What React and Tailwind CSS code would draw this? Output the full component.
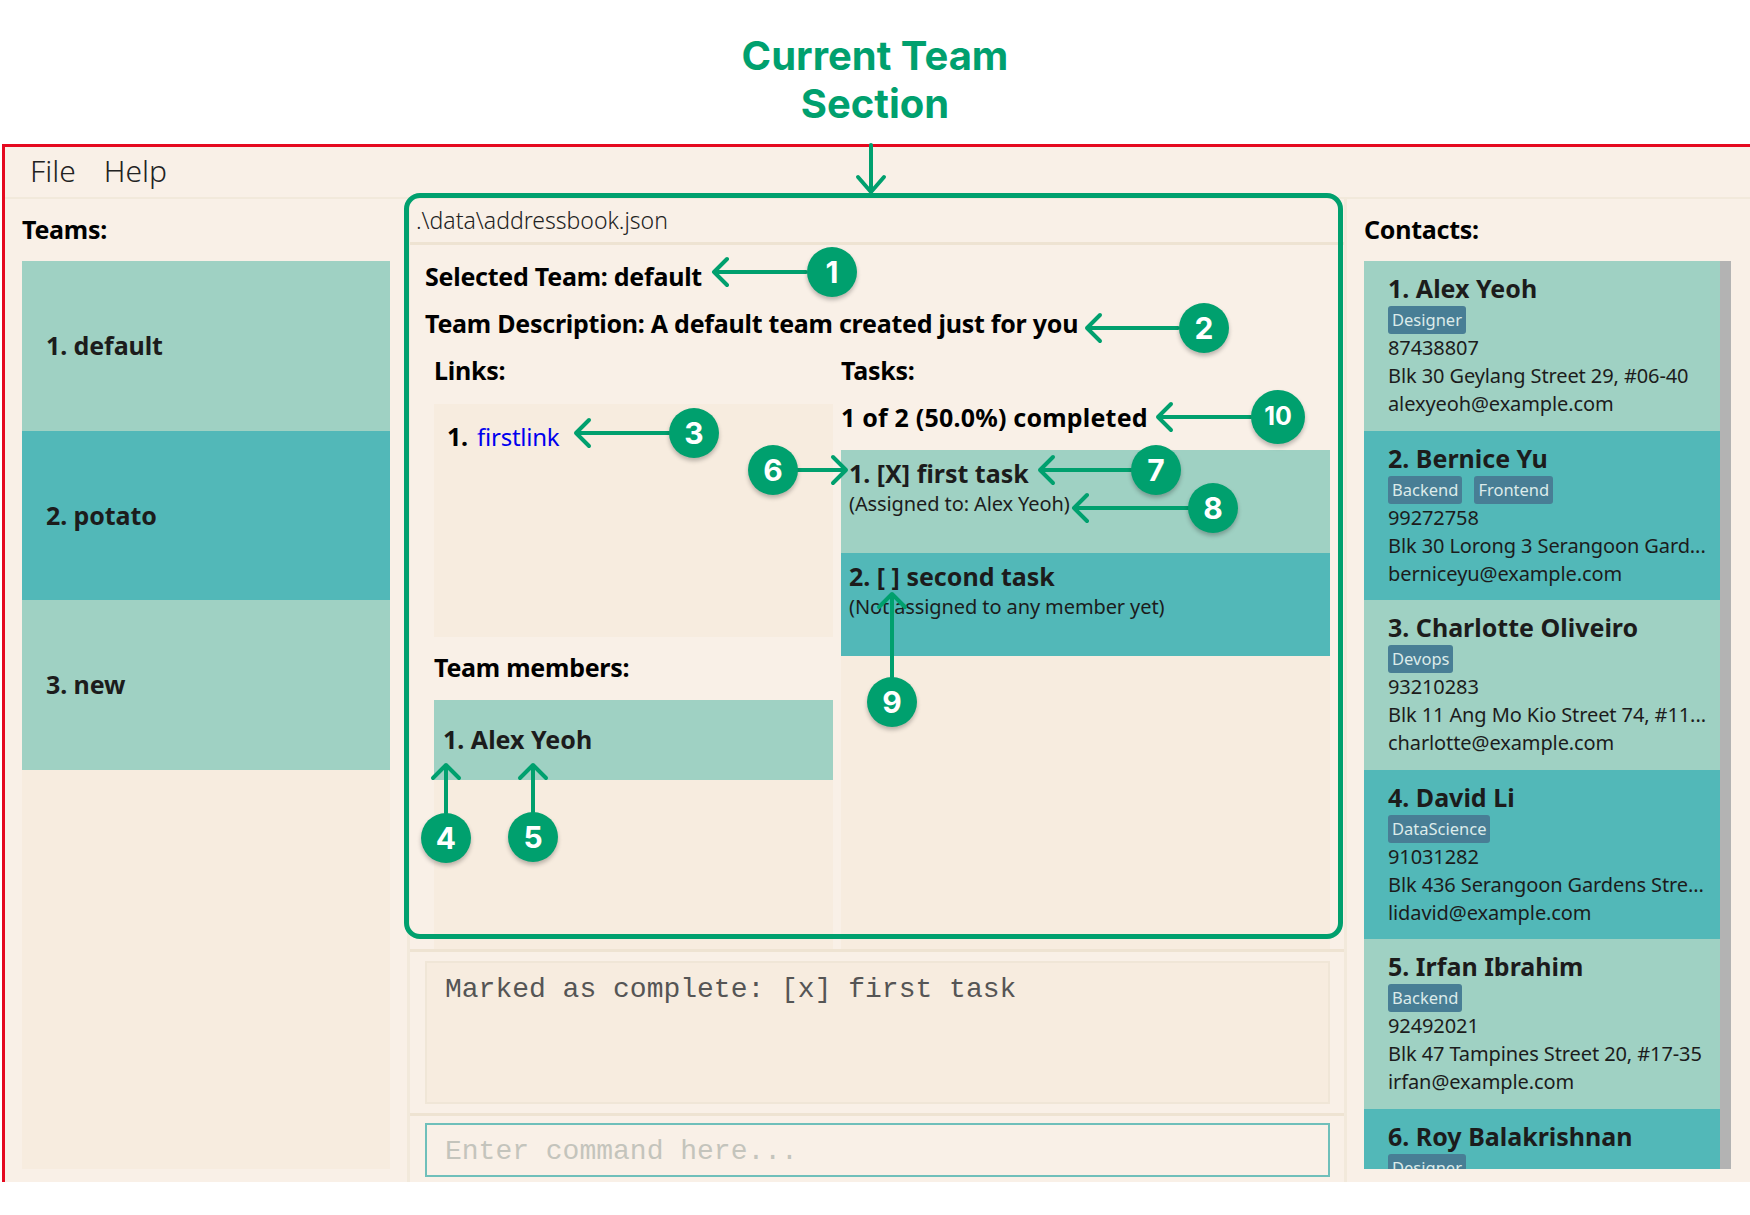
const contacts = [
  { n: "1. Alex Yeoh", tags: ["Designer"], p: "87438807", a: "Blk 30 Geylang Street 29, #06-40", e: "alexyeoh@example.com" },
  { n: "2. Bernice Yu", tags: ["Backend", "Frontend"], p: "99272758", a: "Blk 30 Lorong 3 Serangoon Gard...", e: "berniceyu@example.com" },
  { n: "3. Charlotte Oliveiro", tags: ["Devops"], p: "93210283", a: "Blk 11 Ang Mo Kio Street 74, #11...", e: "charlotte@example.com" },
  { n: "4. David Li", tags: ["DataScience"], p: "91031282", a: "Blk 436 Serangoon Gardens Stre...", e: "lidavid@example.com" },
  { n: "5. Irfan Ibrahim", tags: ["Backend"], p: "92492021", a: "Blk 47 Tampines Street 20, #17-35", e: "irfan@example.com" },
  { n: "6. Roy Balakrishnan", tags: ["Designer"], p: "92624417", a: "Blk 45 Aljunied Street 85, #11-31", e: "royb@example.com" },
];

const callouts = [
  ["1", "left-[807px] top-[247px] h-[50px] w-[50px] text-[30px]"],
  ["2", "left-[1179px] top-[303px] h-[50px] w-[50px] text-[30px]"],
  ["3", "left-[669px] top-[408px] h-[50px] w-[50px] text-[30px]"],
  ["4", "left-[421px] top-[813px] h-[50px] w-[50px] text-[30px]"],
  ["5", "left-[508px] top-[812px] h-[50px] w-[50px] text-[30px]"],
  ["6", "left-[748px] top-[445px] h-[50px] w-[50px] text-[30px]"],
  ["7", "left-[1131px] top-[445px] h-[50px] w-[50px] text-[30px]"],
  ["8", "left-[1188px] top-[483px] h-[50px] w-[50px] text-[30px]"],
  ["9", "left-[867px] top-[677px] h-[50px] w-[50px] text-[30px]"],
  ["10", "left-[1251px] top-[390px] h-[54px] w-[54px] text-[25px]"],
];

const arrows = [
  "M806 272H714M727 259L714 272L727 285",
  "M1178 328H1087M1100 315L1087 328L1100 341",
  "M669 433H576M589 420L576 433L589 446",
  "M446 813V765M433 778L446 765L459 778",
  "M533 812V765M520 778L533 765L546 778",
  "M797 470H846M833 457L846 470L833 483",
  "M1131 470H1040M1053 457L1040 470L1053 483",
  "M1188 508H1074M1087 495L1074 508L1087 521",
  "M892 677V594M879 607L892 594L905 607",
  "M1251 417H1158M1171 404L1158 417L1171 430",
  "M871 145V192M858 177L871 192L884 177",
];

function Card({ c, i }) {
  return (
    <div className={`h-[169.6px] shrink-0 px-[24px] pt-[10px] text-[#1c1c1c] ${i % 2 ? "bg-[#52b8b8]" : "bg-[#9fd1c3]"}`}>
      <div className="h-[35px] whitespace-nowrap text-[25px] leading-[34px] font-bold">{c.n}</div>
      <div className="flex h-[28px] gap-[12px]">
        {c.tags.map((t) => (
          <span key={t} className="rounded-[3px] bg-[#487e95] px-[4px] text-[16.5px] leading-[28px] text-[#dcebea]">{t}</span>
        ))}
      </div>
      <div className="h-[28px] whitespace-nowrap text-[20px] leading-[28px] tracking-[-0.1px]">{c.p}</div>
      <div className="h-[28px] whitespace-nowrap text-[20px] leading-[28px] tracking-[-0.1px]">{c.a}</div>
      <div className="h-[28px] whitespace-nowrap text-[20px] leading-[28px] tracking-[-0.1px]">{c.e}</div>
    </div>
  );
}

function Task({ name, sub, dark }) {
  return (
    <div className={`h-[103px] px-[8px] pt-[2px] text-[#1c1c1c] ${dark ? "bg-[#52b8b8]" : "bg-[#9fd1c3]"}`}>
      <div className="h-[40px] text-[25px] leading-[42px] font-bold tracking-normal">{name}</div>
      <div className="h-[24px] text-[20px] leading-[24px] font-normal tracking-[-0.1px]">{sub}</div>
    </div>
  );
}

function Team({ label, dark }) {
  return (
    <div className={`flex h-[169.6px] items-center px-[24px] text-[25px] font-bold tracking-[-0.1px] text-[#1c1c1c] ${dark ? "bg-[#52b8b8]" : "bg-[#9fd1c3]"}`}>
      {label}
    </div>
  );
}

export default function App() {
  return (
    <div className="relative h-[1215px] w-[1750px] overflow-hidden bg-white font-['Noto_Sans',sans-serif]">
      <div className="flex h-[144px] flex-col items-center pt-[32px] font-['Inter',sans-serif] text-[40px] leading-[48px] font-bold text-[#00a06e]">
        <div>Current Team</div>
        <div>Section</div>
      </div>
      <div className="ml-[2px] flex h-[1038px] flex-col border-t-[3px] border-l-[3px] border-[#e5091f] bg-[#f9f0e7]">
        <div className="flex h-[52px] shrink-0 items-center gap-[28px] border-b-2 border-[#f2e9db] pb-[3px] pl-[25px] text-[30px] font-light text-[#222]">
          <span>File</span>
          <span>Help</span>
        </div>
        <div className="flex min-h-0 flex-1">
          <div className="flex w-[402px] shrink-0 flex-col pl-[17px]">
            <div className="flex h-[62px] shrink-0 items-center text-[25px] font-bold tracking-[-0.25px] text-black">Teams:</div>
            <div className="h-[908px] w-[368px] bg-[#f7ecdf]">
              <Team label="1. default" />
              <Team label="2. potato" dark />
              <Team label="3. new" />
            </div>
          </div>
          <div className="flex w-[940px] shrink-0 flex-col border-r-[3px] border-l-[3px] border-[#f2e9db]">
            <div className="flex h-[46px] shrink-0 items-center border-b-[3px] border-[#eee3d2] pl-[6px] text-[23px] font-light text-[#222]">.\data\addressbook.json</div>
            <div className="flex min-h-0 flex-1 flex-col border-b-[3px] border-[#eee3d2] pl-[15px] text-[25px] font-bold tracking-[-0.25px] text-black">
              <div className="mt-[8px] flex h-[47px] shrink-0 items-center">Selected Team: default</div>
              <div className="flex h-[47.5px] shrink-0 items-center">Team Description: A default team created just for you</div>
              <div className="flex min-h-0 flex-1">
                <div className="ml-[9px] flex w-[399px] shrink-0 flex-col">
                  <div className="flex h-[47px] shrink-0 items-center">Links:</div>
                  <div className="mt-[9px] h-[233px] shrink-0 bg-[#f7ecdf] px-[13px] pt-[15px]">
                    <div className="leading-[34px]">1. <a className="ml-[3px] text-[24px] font-normal text-[#0000ee]">firstlink</a></div>
                  </div>
                  <div className="flex h-[63px] shrink-0 items-center">Team members:</div>
                  <div className="flex-1 bg-[#f7ecdf]">
                    <div className="flex h-[80px] items-center bg-[#9fd1c3] px-[9px] tracking-normal text-[#1c1c1c]">1. Alex Yeoh</div>
                  </div>
                </div>
                <div className="ml-[8px] flex w-[489px] shrink-0 flex-col">
                  <div className="flex h-[47px] shrink-0 items-center">Tasks:</div>
                  <div className="flex h-[46px] shrink-0 items-center tracking-[0.2px]">1 of 2 (50.0%) completed</div>
                  <div className="mt-[9px] flex-1 bg-[#f7ecdf]">
                    <Task name="1. [X] first task" sub="(Assigned to: Alex Yeoh)" />
                    <Task name="2. [ ] second task" sub="(Not assigned to any member yet)" dark />
                  </div>
                </div>
              </div>
            </div>
            <div className="flex h-[164px] shrink-0 items-center border-b-[3px] border-[#eee3d2] pr-[14px] pl-[15px]">
              <div className="h-[143px] w-full border-2 border-[#f0e6d7] bg-[#f7ecdf] px-[18px] pt-[7px] font-['Liberation_Mono',monospace] text-[28px] leading-[40px] text-[#555]">
                Marked as complete: [x] first task
              </div>
            </div>
            <div className="flex h-[66px] shrink-0 items-start pt-[7px] pr-[14px] pl-[15px]">
              <div className="flex h-[54px] w-full items-center border-2 border-[#6fbfba] px-[18px] pt-[4px] font-['Liberation_Mono',monospace] text-[28px] text-[#c4c4bc]">
                Enter command here...
              </div>
            </div>
          </div>
          <div className="flex flex-1 flex-col pl-[17px]">
            <div className="flex h-[62px] shrink-0 items-center text-[25px] font-bold tracking-[-0.25px] text-black">Contacts:</div>
            <div className="flex h-[908px] w-[367px] overflow-hidden">
              <div className="w-[356px] shrink-0">
                {contacts.map((c, i) => <Card key={c.n} c={c} i={i} />)}
              </div>
              <div className="w-[11px] bg-[#b3b3b3]" />
            </div>
          </div>
        </div>
      </div>

      <div className="pointer-events-none absolute top-[193px] left-[404px] h-[746px] w-[939px] rounded-[16px] border-[5px] border-[#00a06e]" />
      <svg className="pointer-events-none absolute inset-0" width="1750" height="1215" fill="none" stroke="#00a06e" strokeWidth="4" strokeLinecap="round" strokeLinejoin="round">
        {arrows.map((d) => <path key={d} d={d} />)}
      </svg>
      {callouts.map(([n, cls]) => (
        <div key={n} className={`absolute flex items-center justify-center rounded-full bg-[#00a06e] font-['Inter',sans-serif] font-bold text-white shadow-[0_3px_4px_rgba(0,0,0,0.25)] ${cls}`}>
          {n}
        </div>
      ))}
    </div>
  );
}
